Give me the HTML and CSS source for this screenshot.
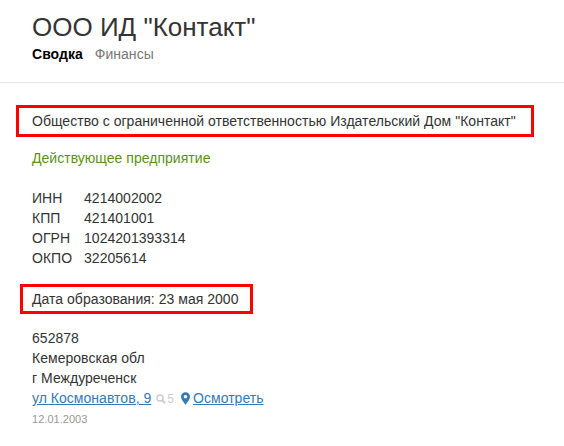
FILE: index.html
```html
<!DOCTYPE html>
<html lang="ru">
<head>
<meta charset="utf-8">
<title>ООО ИД "Контакт"</title>
<link rel="stylesheet" href="styles.css">
</head>
<body>
<header class="head">
  <h1 class="title">ООО ИД "Контакт"</h1>
  <nav class="tabs"><b class="tab-on">Сводка</b><span class="tab">Финансы</span></nav>
</header>
<main class="content">
  <p class="line full">Общество с ограниченной ответственностью Издательский Дом "Контакт"</p>
  <p class="line status">Действующее предприятие</p>
  <dl class="codes">
    <dt>ИНН</dt><dd>4214002002</dd>
    <dt>КПП</dt><dd>421401001</dd>
    <dt>ОГРН</dt><dd>1024201393314</dd>
    <dt>ОКПО</dt><dd>32205614</dd>
  </dl>
  <p class="line date">Дата образования: 23 мая 2000</p>
  <address class="addr">
    <div>652878</div>
    <div>Кемеровская обл</div>
    <div>г Междуреченск</div>
    <div class="street"><a href="#">ул Космонавтов, 9</a><span class="count"><svg class="ico-search" viewBox="0 0 10 10" width="10" height="10"><circle cx="4" cy="4" r="3" fill="none" stroke="#ccc" stroke-width="1.500"/><path d="M6.200 6.200 9.200 9.200" stroke="#ccc" stroke-width="2"/></svg>5</span><svg class="ico-pin" viewBox="0 0 10 14" width="9" height="13"><path fill-rule="evenodd" fill="#337ab7" d="M5 0a5 5 0 0 0-5 5c0 3 3.500 6.500 5 9 1.500-2.500 5-6 5-9a5 5 0 0 0-5-5zm0 3a2 2 0 1 1 0 4 2 2 0 0 1 0-4z"/></svg><a href="#">Осмотреть</a></div>
    <div class="when">12.01.2003</div>
  </address>
</main>
<div class="mark mark-full"></div>
<div class="mark mark-date"></div>
</body>
</html>
```

FILE: styles.css
```css
* { box-sizing: border-box; }
html, body { margin: 0; padding: 0; }
body {
  position: relative;
  height: 446px;
  overflow: hidden;
  background: #fff;
  color: #333;
  font: 14px/20px "Liberation Sans", Arial, sans-serif;
  letter-spacing: 0.030px;
}
.head {
  height: 83px;
  padding: 12px 32px 0;
  border-bottom: 1px solid #e7e7e7;
}
.title {
  margin: 0;
  font-size: 26px;
  font-weight: 400;
  line-height: 30px;
  letter-spacing: 0;
}
.tabs { display: flex; gap: 12px; margin-top: 2px; }
.tab-on { color: #000; }
.tab { color: #777; }
.content { padding: 28px 32px 0; }
.line { margin: 0; }
.status { margin-top: 17px; color: #5a9216; }
.codes {
  display: grid;
  grid-template-columns: 52px auto;
  margin: 20px 0 0;
}
.codes dd { margin: 0; }
.date { margin-top: 21px; }
.addr { margin-top: 19px; font-style: normal; }
a { color: #337ab7; }
.street { white-space: nowrap; }
.count { color: #ccc; font-size: 12px; margin-left: 5px; }
.ico-search { vertical-align: -1px; margin-right: 1px; }
.ico-pin { vertical-align: -2px; margin: 0 3px 0 7px; }
.when { color: #999; font-size: 11px; }
.mark { position: absolute; border: 3px solid #f00; }
.mark-full { left: 16px; top: 105px; width: 518px; height: 32px; }
.mark-date { left: 20px; top: 284px; width: 233px; height: 30px; }
```
